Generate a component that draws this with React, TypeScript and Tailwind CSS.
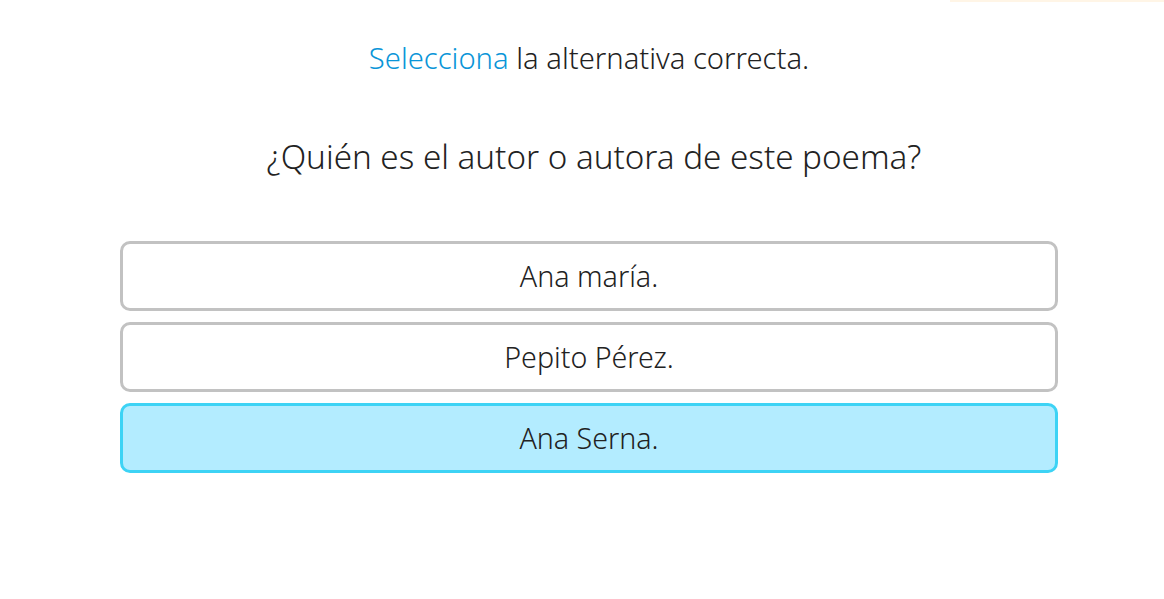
import React from 'react';

const options = [
  { label: 'Ana maría.', selected: false },
  { label: 'Pepito Pérez.', selected: false },
  { label: 'Ana Serna.', selected: true },
];

const App: React.FC = () => {
  return (
    <div className="min-h-[599px] w-full bg-white text-[#222222] font-['Noto_Sans',sans-serif] font-light">
      {/* franja superior */}
      <div className="flex justify-end">
        <div className="h-[2px] w-[214px] bg-[#fff5e6]" />
      </div>

      <div className="ml-[120px] w-[938px]">
        <p className="mt-[38px] text-center text-[29.2px] leading-[36px]">
          <span className="text-[#0a95d8]">Selecciona</span> la alternativa correcta.
        </p>

        <h2 className="mt-[61px] pl-[10px] text-center text-[33.2px] leading-[40px]">
          ¿Quién es el autor o autora de este poema?
        </h2>

        <div className="mt-[64px] flex flex-col gap-[11px]">
          {options.map((opt, index) => (
            <button
              key={index}
              className={`flex h-[70px] w-full items-center justify-center rounded-[10px] border-[3px] text-[28.6px] ${
                opt.selected ? 'border-[#3dd3f5] bg-[#b3ecff]' : 'border-[#c2c2c2] bg-white'
              }`}
            >
              {opt.label}
            </button>
          ))}
        </div>
      </div>
    </div>
  );
};

export default App;
